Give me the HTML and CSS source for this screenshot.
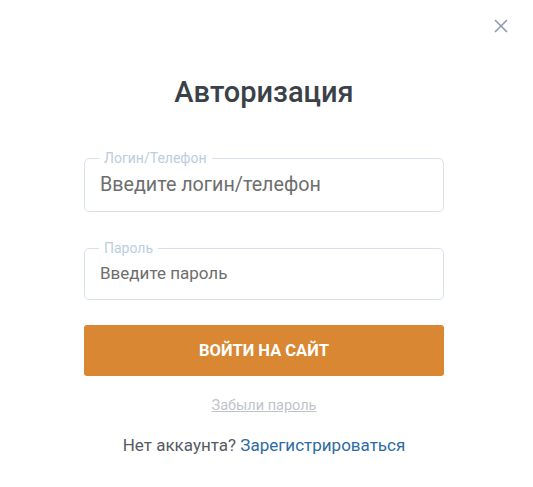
FILE: index.html
```html
<!DOCTYPE html>
<html lang="ru">
<head>
<meta charset="utf-8">
<link rel="stylesheet" href="styles.css">
</head>
<body>
<div class="modal">
  <button class="close" aria-label="Закрыть">
    <svg width="16" height="16" viewBox="0 0 16 16"><path d="M2 2L14 14M14 2L2 14" stroke="#8f9bac" stroke-width="1.6" fill="none"/></svg>
  </button>
  <h1 class="title">Авторизация</h1>
  <fieldset class="field field-login">
    <legend>Логин/Телефон</legend>
    <input type="text" placeholder="Введите логин/телефон">
  </fieldset>
  <fieldset class="field field-pass">
    <legend>Пароль</legend>
    <input type="password" placeholder="Введите пароль">
  </fieldset>
  <button class="submit">Войти на сайт</button>
  <a class="forgot" href="#">Забыли пароль</a>
  <p class="register">Нет аккаунта? <a href="#">Зарегистрироваться</a></p>
</div>
</body>
</html>
```
FILE: styles.css
```css
* { box-sizing: border-box; }
html, body { margin: 0; padding: 0; background: #fff; }
body { font-family: Roboto, "Noto Sans", Arial, sans-serif; }
.modal {
  position: relative;
  width: 533px;
  height: 487px;
  padding: 0 89px 0 84px;
  display: flex;
  flex-direction: column;
  align-items: stretch;
}
.close {
  position: absolute;
  top: 18px;
  right: 24px;
  background: none;
  border: 0;
  padding: 0;
  width: 16px;
  height: 16px;
  cursor: pointer;
}
.close svg { display: block; }
.title {
  margin: 75px 0 0;
  text-align: center;
  font-size: 29px;
  line-height: 34px;
  font-weight: 500;
  color: #3a4149;
}
.field {
  margin: 0;
  padding: 0 15px;
  border: 1px solid #d8e1eb;
  border-radius: 5px;
  min-width: 0;
}
.field legend {
  margin-left: -1px;
  padding: 0 5px;
  font-size: 14px;
  line-height: 16px;
  color: #bccde0;
}
.field input {
  display: block;
  width: 100%;
  border: 0;
  outline: none;
  padding: 0;
  margin-top: -8px;
  font-family: inherit;
  color: #333;
  background: transparent;
}
.field input::placeholder { color: #6e6e6e; opacity: 1; }
.field-login { margin-top: 41px; }
.field-login input { font-size: 19.7px; height: 53px; line-height: 53px; }
.field-pass { margin-top: 28px; }
.field-pass input { font-size: 17px; height: 51px; line-height: 51px; }
.submit {
  margin-top: 25px;
  height: 51px;
  border: 0;
  border-radius: 3px;
  background: #d98732;
  color: #fff;
  font-family: inherit;
  font-size: 16.5px;
  font-weight: 700;
  text-transform: uppercase;
  cursor: pointer;
}
.forgot {
  align-self: center;
  margin-top: 21px;
  font-size: 14.5px;
  line-height: 17px;
  color: #bfc4cb;
  text-decoration: underline;
}
.register {
  margin: 21px 0 0;
  text-align: center;
  font-size: 17px;
  line-height: 20px;
  color: #555b61;
}
.register a { color: #2e6ba3; text-decoration: none; }
```
